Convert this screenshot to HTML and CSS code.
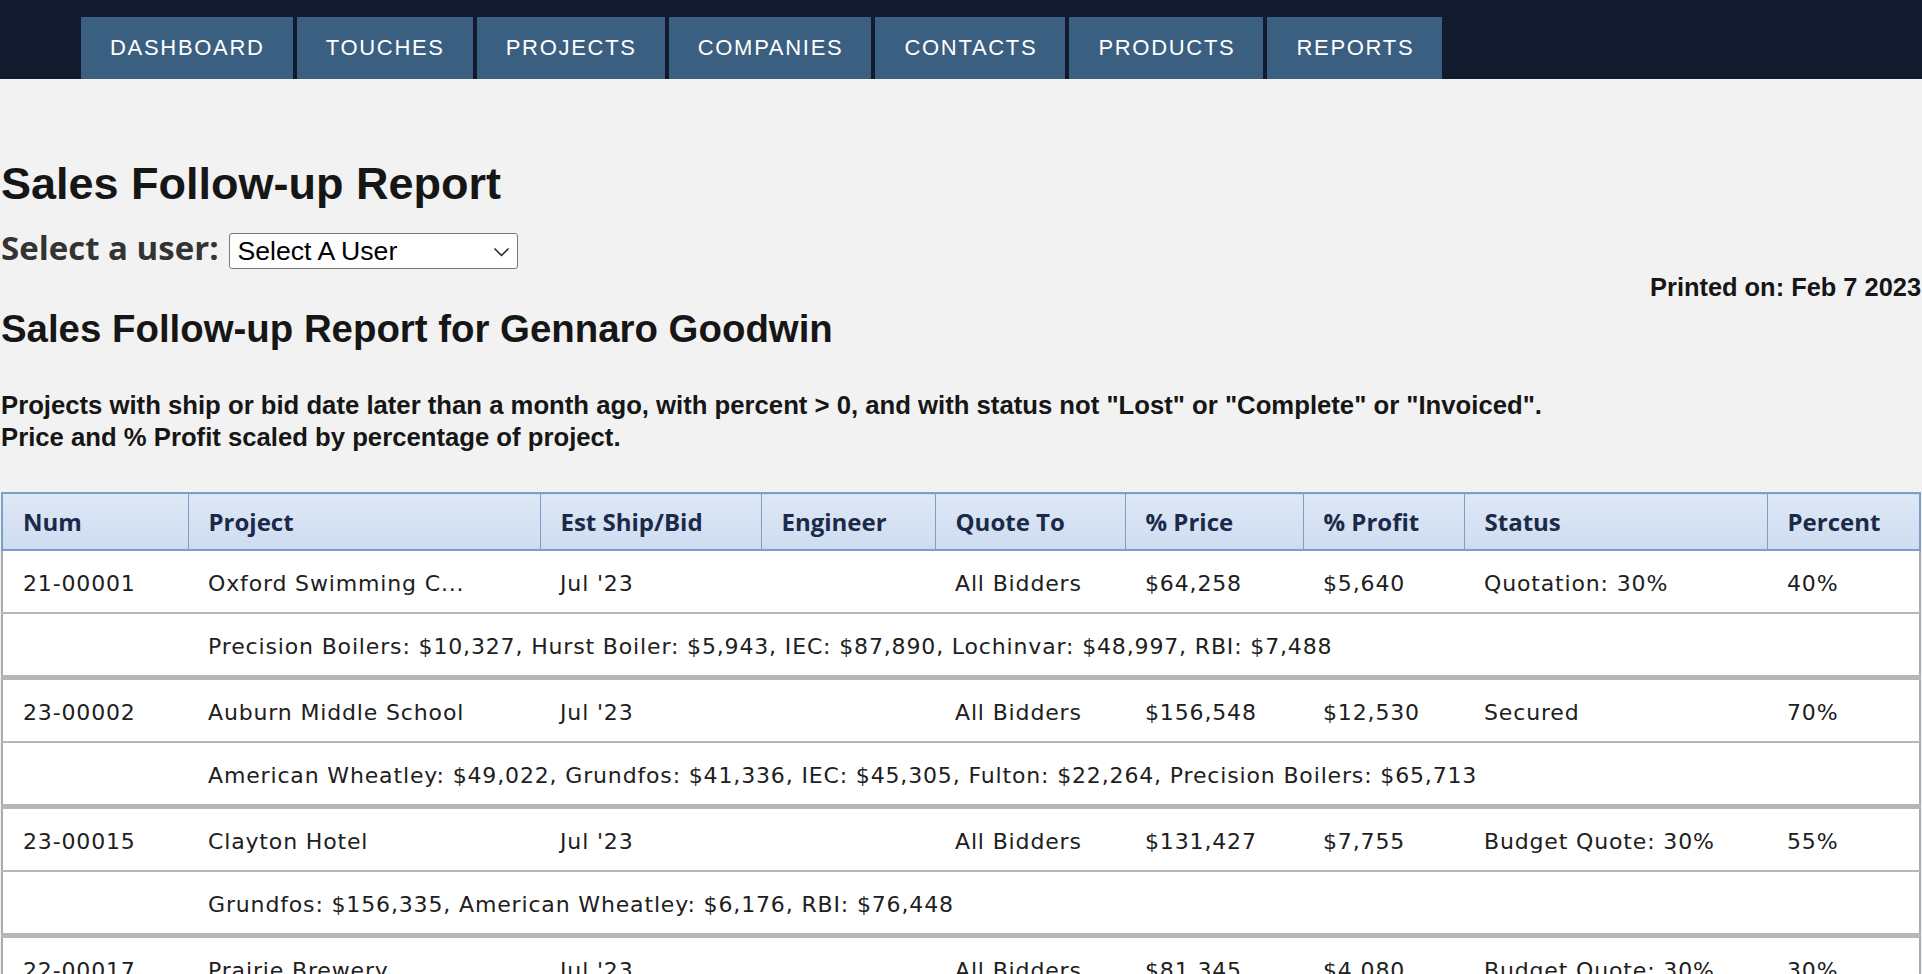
FILE: index.html
```html
<!DOCTYPE html>
<html lang="en">
<head>
<meta charset="utf-8">
<title>Sales Follow-up Report</title>
<link rel="stylesheet" href="styles.css">
</head>
<body>
<nav class="topnav">
  <ul class="tabs">
    <li class="tab"><a href="#">Dashboard</a></li>
    <li class="tab"><a href="#">Touches</a></li>
    <li class="tab"><a href="#">Projects</a></li>
    <li class="tab"><a href="#">Companies</a></li>
    <li class="tab"><a href="#">Contacts</a></li>
    <li class="tab"><a href="#">Products</a></li>
    <li class="tab"><a href="#">Reports</a></li>
  </ul>
</nav>
<main class="page">
  <h1 class="title">Sales Follow-up Report</h1>
  <div class="user-picker">
    <label class="picker-label" for="user">Select a user:</label>
    <div class="select-wrap">
      <select id="user" class="user-select">
        <option>Select A User</option>
        <option>Gennaro Goodwin</option>
      </select>
      <svg class="chevron" width="17" height="10" viewBox="0 0 17 10" aria-hidden="true"><path d="M1.5 1.5 L8.5 8.5 L15.5 1.5" fill="none" stroke="#222" stroke-width="1.5"/></svg>
    </div>
  </div>
  <div class="printed">Printed on: Feb 7 2023</div>
  <h2 class="subtitle">Sales Follow-up Report for Gennaro Goodwin</h2>
  <p class="criteria">Projects with ship or bid date later than a month ago, with percent &gt; 0, and with status not "Lost" or "Complete" or "Invoiced".<br>Price and % Profit scaled by percentage of project.</p>
  <table class="report">
    <colgroup>
      <col class="c-num"><col class="c-project"><col class="c-ship"><col class="c-eng"><col class="c-quote"><col class="c-price"><col class="c-profit"><col class="c-status"><col class="c-percent">
    </colgroup>
    <thead>
      <tr>
        <th>Num</th><th>Project</th><th>Est Ship/Bid</th><th>Engineer</th><th>Quote To</th><th>% Price</th><th>% Profit</th><th>Status</th><th>Percent</th>
      </tr>
    </thead>
    <tbody>
      <tr class="main-row"><td>21-00001</td><td>Oxford Swimming C...</td><td>Jul '23</td><td></td><td>All Bidders</td><td>$64,258</td><td>$5,640</td><td>Quotation: 30%</td><td>40%</td></tr>
      <tr class="detail-row"><td></td><td colspan="8">Precision Boilers: $10,327, Hurst Boiler: $5,943, IEC: $87,890, Lochinvar: $48,997, RBI: $7,488</td></tr>
      <tr class="main-row"><td>23-00002</td><td>Auburn Middle School</td><td>Jul '23</td><td></td><td>All Bidders</td><td>$156,548</td><td>$12,530</td><td>Secured</td><td>70%</td></tr>
      <tr class="detail-row"><td></td><td colspan="8">American Wheatley: $49,022, Grundfos: $41,336, IEC: $45,305, Fulton: $22,264, Precision Boilers: $65,713</td></tr>
      <tr class="main-row"><td>23-00015</td><td>Clayton Hotel</td><td>Jul '23</td><td></td><td>All Bidders</td><td>$131,427</td><td>$7,755</td><td>Budget Quote: 30%</td><td>55%</td></tr>
      <tr class="detail-row"><td></td><td colspan="8">Grundfos: $156,335, American Wheatley: $6,176, RBI: $76,448</td></tr>
      <tr class="main-row"><td>22-00017</td><td>Prairie Brewery</td><td>Jul '23</td><td></td><td>All Bidders</td><td>$81,345</td><td>$4,080</td><td>Budget Quote: 30%</td><td>30%</td></tr>
      <tr class="detail-row"><td></td><td colspan="8">Lochinvar: $92,410, Grundfos: $31,725, RBI: $12,950</td></tr>
    </tbody>
  </table>
</main>
</body>
</html>
```
FILE: styles.css
```css
html, body {
  margin: 0;
  padding: 0;
}
body {
  background: #f2f2f2;
  color: #161616;
  font-family: "Liberation Sans", Arial, sans-serif;
}
.topnav {
  background: #111b2d;
  height: 79px;
}
.tabs {
  list-style: none;
  margin: 0;
  padding: 17px 0 0 81px;
  display: flex;
  gap: 4px;
}
.tab a {
  display: block;
  background: #3b5f81;
  color: #ffffff;
  text-decoration: none;
  text-transform: uppercase;
  font-family: "Liberation Sans", Arial, sans-serif;
  font-size: 22px;
  letter-spacing: 1.7px;
  line-height: 62px;
  padding: 0 28px 0 29px;
}
.page {
  padding: 0 1px;
}
.title {
  margin: 79px 0 0 0;
  font-size: 45px;
  line-height: 52px;
  font-weight: bold;
  color: #161616;
}
.user-picker {
  display: flex;
  align-items: baseline;
  margin-top: 22px;
}
.picker-label {
  font-family: "Open Sans", sans-serif;
  font-weight: bold;
  font-size: 33px;
  line-height: 32px;
  color: #333333;
  margin-right: 10px;
}
.select-wrap {
  position: relative;
  display: inline-block;
}
.user-select {
  appearance: none;
  -webkit-appearance: none;
  width: 289px;
  height: 36px;
  border: 1px solid #7a7a7a;
  border-radius: 3px;
  background: #ffffff;
  color: #000000;
  font-family: "Liberation Sans", Arial, sans-serif;
  font-size: 26.6px;
  padding: 0 0 0 8px;
  margin: 0;
}
.chevron {
  position: absolute;
  right: 8px;
  top: 14px;
  pointer-events: none;
}
.printed {
  margin-top: 3px;
  text-align: right;
  font-weight: bold;
  font-size: 25.4px;
  line-height: 30px;
  color: #161616;
}
.subtitle {
  margin: 5px 0 0 0;
  font-size: 38.4px;
  line-height: 44px;
  font-weight: bold;
  color: #161616;
}
.criteria {
  margin: 39px 0 0 0;
  font-size: 25.7px;
  line-height: 31.7px;
  font-weight: bold;
  color: #161616;
}
.report {
  margin-top: 39px;
  width: 1919px;
  table-layout: fixed;
  border-collapse: collapse;
  background: #ffffff;
  border-left: 2px solid #a9abb0;
  border-right: 2px solid #a9abb0;
}
.c-num { width: 186px; }
.c-project { width: 352px; }
.c-ship { width: 221px; }
.c-eng { width: 174px; }
.c-quote { width: 190px; }
.c-price { width: 178px; }
.c-profit { width: 161px; }
.c-status { width: 303px; }
.c-percent { width: 153px; }
.report th {
  background: linear-gradient(#dee8f6, #cedcf1);
  border: 2px solid #7f9ec6;
  border-left-width: 1px;
  border-right-width: 1px;
  color: #1a2a48;
  font-family: "Open Sans", sans-serif;
  font-weight: bold;
  font-size: 24px;
  line-height: 55px;
  text-align: left;
  padding: 0 0 0 20px;
  white-space: nowrap;
}
.report th:first-child { border-left-width: 2px; }
.report th:last-child { border-right-width: 2px; }
.report td {
  font-family: "DejaVu Sans", sans-serif;
  font-size: 22px;
  letter-spacing: 0.85px;
  color: #202020;
  padding: 4px 0 0 20px;
  line-height: 57px;
  white-space: nowrap;
  overflow: hidden;
}
.main-row td {
  border-bottom: 2px solid #b5b6ba;
}
.detail-row td {
  border-bottom: 5px solid #b5b6ba;
}
```
